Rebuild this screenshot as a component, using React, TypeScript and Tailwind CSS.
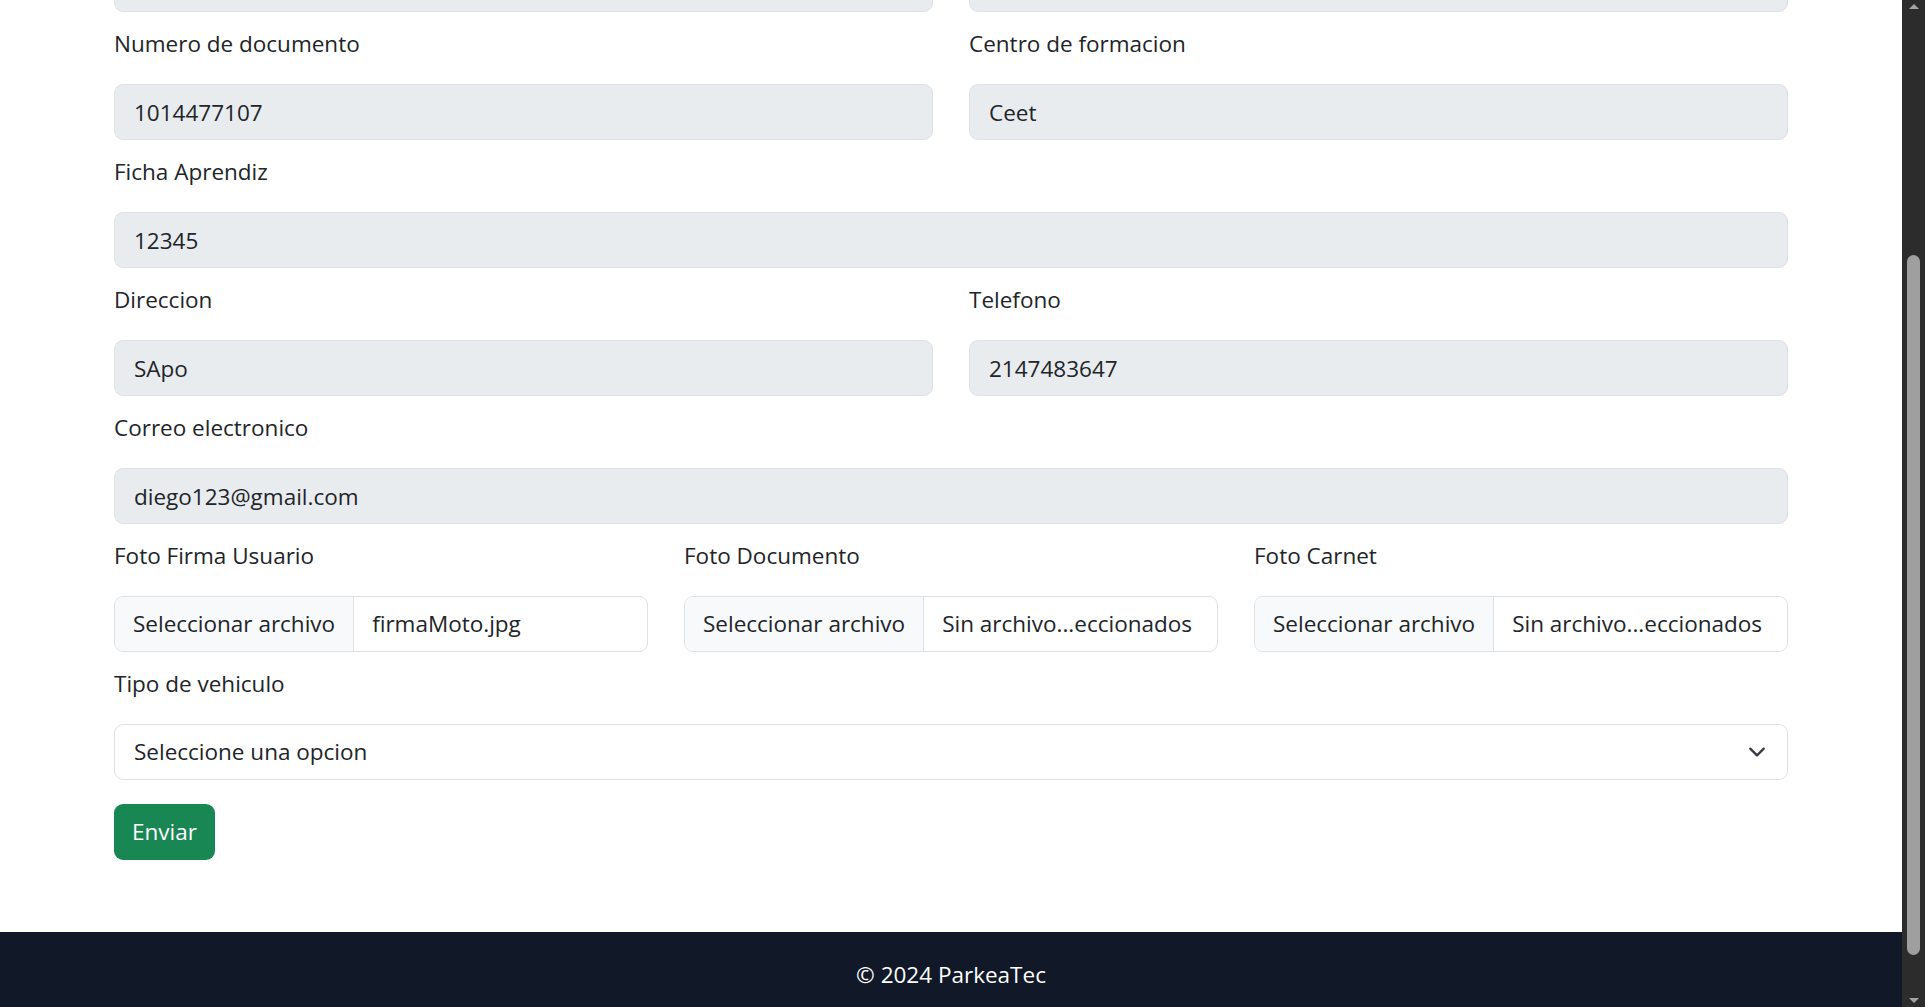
import type { ReactNode } from "react";

// campos de solo lectura del formulario
function Field({ label, value }: { label: string; value: string }) {
  return (
    <div className="mb-[14px]">
      <label className="mb-[22px] block h-[36px] leading-[36px]">{label}</label>
      <div className="flex h-[56px] items-center rounded-[9px] border border-[#dee2e6] bg-[#e9ecef] px-[19px] pt-px leading-[36px]">
        {value}
      </div>
    </div>
  );
}

function FileField({ label, fileName }: { label: string; fileName: string }) {
  return (
    <div className="mb-[14px]">
      <label className="mb-[22px] block h-[36px] leading-[36px]">{label}</label>
      <div className="flex h-[56px] overflow-hidden rounded-[9px] border border-[#dee2e6] bg-white leading-[36px]">
        <span className="flex items-center border-r border-[#dee2e6] bg-[#f8f9fa] px-[18px] whitespace-nowrap">
          Seleccionar archivo
        </span>
        <span className="flex min-w-0 items-center truncate px-[18px] whitespace-nowrap">
          {fileName}
        </span>
      </div>
    </div>
  );
}

function Row({ children }: { children: ReactNode }) {
  return <div className="grid grid-cols-2 gap-x-[36px]">{children}</div>;
}

function Scrollbar() {
  return (
    <div className="flex w-[23px] shrink-0 flex-col items-center bg-[#2c2c2c]">
      <svg width="12" height="17" viewBox="0 0 12 17" className="shrink-0">
        <path d="M1 9 L6 4 L11 9 Z" fill="#a3a3a3" />
      </svg>
      <div className="flex-1">
        <div className="mt-[238px] h-[700px] w-[13px] rounded-full bg-[#9f9f9f]" />
      </div>
      <svg width="12" height="17" viewBox="0 0 12 17" className="shrink-0">
        <path d="M1 8 L6 13 L11 8 Z" fill="#a3a3a3" />
      </svg>
    </div>
  );
}

export default function App() {
  return (
    <div className="flex h-[1007px] w-full overflow-hidden bg-white font-['Open_Sans',sans-serif] text-[22.5px] text-[#212529]">
      <div className="flex min-w-0 flex-1 flex-col">
        <main className="flex flex-1 flex-col justify-end overflow-hidden">
          <form className="mx-auto w-[1674px] pb-[72px]">
            {/* fila anterior, casi fuera de la vista */}
            <Row>
              <div className="mb-[14px] h-[56px] rounded-[9px] border border-[#dee2e6] bg-[#e9ecef]" />
              <div className="mb-[14px] h-[56px] rounded-[9px] border border-[#dee2e6] bg-[#e9ecef]" />
            </Row>
            <Row>
              <Field label="Numero de documento" value="1014477107" />
              <Field label="Centro de formacion" value="Ceet" />
            </Row>
            <Field label="Ficha Aprendiz" value="12345" />
            <Row>
              <Field label="Direccion" value="SApo" />
              <Field label="Telefono" value="2147483647" />
            </Row>
            <Field label="Correo electronico" value="diego123@gmail.com" />
            <div className="grid grid-cols-3 gap-x-[36px]">
              <FileField label="Foto Firma Usuario" fileName="firmaMoto.jpg" />
              <FileField label="Foto Documento" fileName="Sin archivo...eccionados" />
              <FileField label="Foto Carnet" fileName="Sin archivo...eccionados" />
            </div>
            <div>
              <label className="mb-[22px] block h-[36px] leading-[36px]">Tipo de vehiculo</label>
              <div className="flex h-[56px] items-center justify-between rounded-[9px] border border-[#dee2e6] bg-white pr-[21px] pl-[19px] leading-[36px]">
                <span>Seleccione una opcion</span>
                <svg width="18" height="18" viewBox="0 0 16 16" fill="none">
                  <path
                    d="m2 5 6 6 6-6"
                    stroke="#343a40"
                    strokeWidth="2"
                    strokeLinecap="round"
                    strokeLinejoin="round"
                  />
                </svg>
              </div>
            </div>
            <button
              type="button"
              className="mt-[24px] flex h-[56px] items-center rounded-[9px] bg-[#198754] px-[18px] leading-[36px] text-white"
            >
              Enviar
            </button>
          </form>
        </main>
        <footer className="h-[75px] shrink-0 bg-[#111827] pt-[25px] text-center leading-[36px] text-white">
          © 2024 ParkeaTec
        </footer>
      </div>
      <Scrollbar />
    </div>
  );
}
